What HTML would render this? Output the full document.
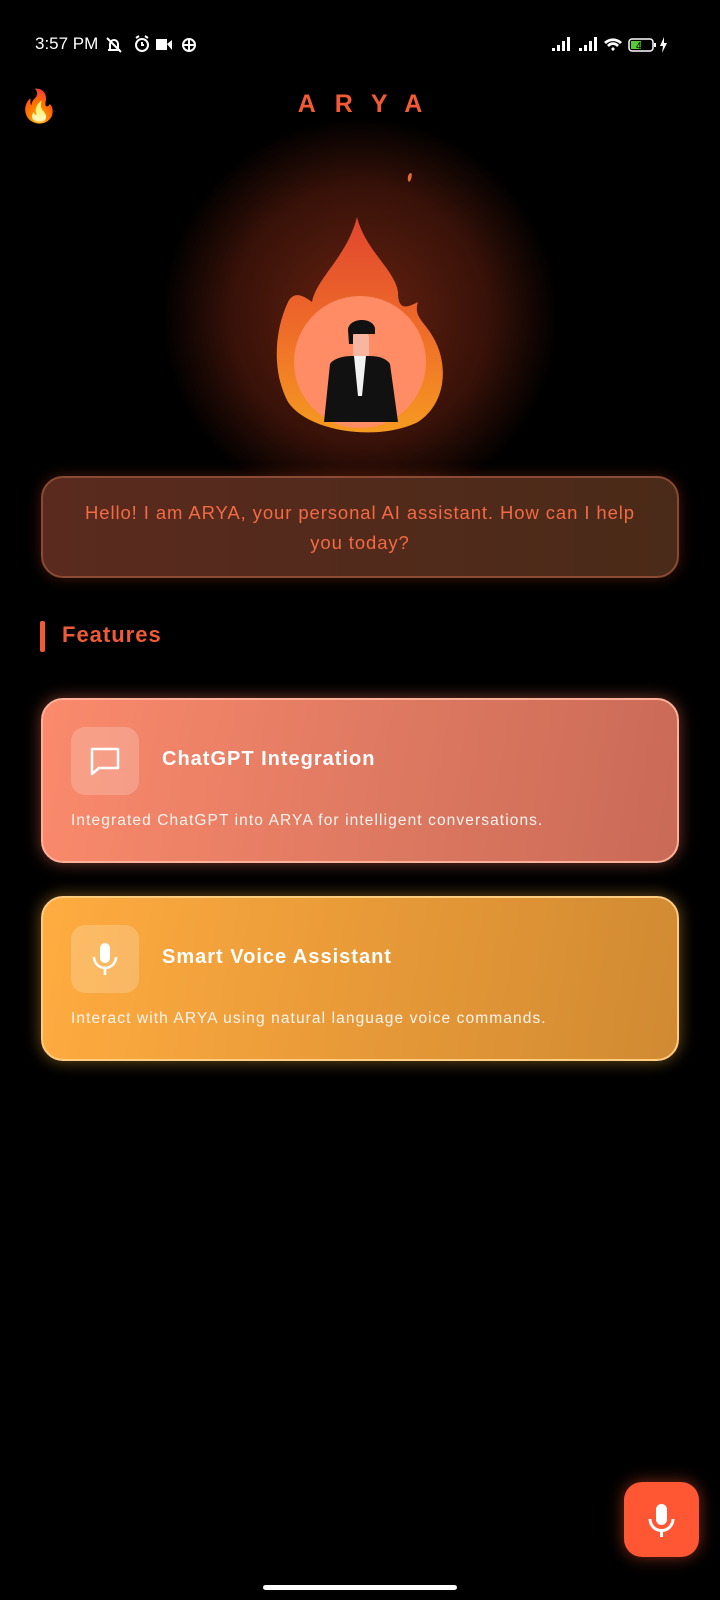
<!DOCTYPE html>
<html><head><meta charset="utf-8"><style>
*{margin:0;padding:0;box-sizing:border-box}
body{width:720px;height:1600px;background:#000;position:relative;overflow:hidden;font-family:"Liberation Sans",sans-serif;color:#fff}
.abs{position:absolute}
.sb{top:34px;font-size:17px;color:#fff}
.msg{left:41px;top:476px;width:638px;height:102px;border-radius:22px;border:2px solid #8a4a33;background:linear-gradient(90deg,#5a2a1e,#4a2a18);box-shadow:0 0 14px rgba(255,90,40,.25);color:#f36a44;font-size:18.5px;text-align:center;line-height:30px;padding-top:20px;letter-spacing:.9px;white-space:nowrap}
.card{left:41px;width:638px;height:165px;border-radius:22px}
.ic{left:28px;top:27px;width:68px;height:68px;border-radius:14px;background:rgba(255,255,255,.2)}
.t{left:119px;font-size:20px;font-weight:bold;letter-spacing:1px}
.d{left:28px;font-size:15.5px;letter-spacing:1.1px;color:#fff4ee;white-space:nowrap}
</style></head><body>
<div class="abs sb" style="left:35px">3:57 PM</div>
<svg class="abs" style="left:104px;top:35px" width="100" height="20" viewBox="0 0 100 20" fill="none" stroke="#fff" stroke-width="2">
<path d="M4 15h12M6 15V9a4 4 0 0 1 8 0v6M3 3l14 14"/>
<circle cx="38" cy="10" r="6"/><path d="M38 7v3h2M32 3l3-2M44 3l-3-2"/>
<rect x="52" y="4" width="11" height="11" fill="#fff" stroke="none"/><path d="M63 9l5-4v10z" fill="#fff" stroke="none"/>
<circle cx="85" cy="10" r="6"/><path d="M79 10h12M85 4v12"/>
</svg>
<svg class="abs" style="left:552px;top:35px" width="135" height="20" viewBox="0 0 135 20" fill="#fff">
<rect x="0" y="13" width="3" height="3"/><rect x="5" y="10" width="3" height="6"/><rect x="10" y="6" width="3" height="10"/><rect x="15" y="2" width="3" height="14"/>
<rect x="27" y="13" width="3" height="3"/><rect x="32" y="10" width="3" height="6"/><rect x="37" y="6" width="3" height="10"/><rect x="42" y="2" width="3" height="14"/>
<path d="M52 7a13 13 0 0 1 18 0l-2 2a10 10 0 0 0-14 0zM55 10a8 8 0 0 1 12 0l-2 2a5 5 0 0 0-8 0zM59 14l2-2 2 2-2 2z"/>
<rect x="77" y="4" width="24" height="12" rx="3" fill="none" stroke="#fff" stroke-width="1.5"/><rect x="79" y="6" width="10" height="8" fill="#5c3"/><rect x="102" y="8" width="2" height="4"/>
<text x="84" y="14" font-size="10" fill="#000" font-family="Liberation Sans">47</text>
<path d="M112 2l-4 9h3l-1 7 5-10h-3z"/>
</svg>
<div class="abs" style="left:19px;top:86px;font-size:32px;line-height:40px">🔥</div>
<div class="abs" style="left:0;width:720px;top:90px;text-align:center;color:#f05a35;font-size:25px;font-weight:bold;letter-spacing:19px;padding-left:19px">ARYA</div>
<div class="abs" style="left:160px;top:116px;width:400px;height:400px;border-radius:50%;background:radial-gradient(circle,rgba(120,40,20,.85) 0%,rgba(80,25,12,.7) 45%,rgba(0,0,0,0) 70%)"></div>
<svg class="abs" style="left:240px;top:150px" width="240" height="290" viewBox="0 0 240 290">
<defs><linearGradient id="fl" x1="0" y1="0" x2="0" y2="1"><stop offset="0" stop-color="#e0452e"/><stop offset=".5" stop-color="#ee6a2a"/><stop offset="1" stop-color="#f59a20"/></linearGradient></defs>
<path d="M168 26c3-6 5-2 3 3-1 4-4 4-3-3z" fill="#e86a30"/>
<path d="M117 67c-10 40-40 60-45 85-8-6-18-12-24 0-14 30-16 70 0 100 20 30 90 40 130 20 30-20 30-60 15-85-8-15-20-20-15-35-10 5-20 10-20-10C155 120 125 100 117 67z" fill="url(#fl)"/>
<circle cx="120" cy="212" r="66" fill="#ff8c64"/>
<rect x="113" y="182" width="16" height="28" rx="6" fill="#f7b6a0"/>
<path d="M108 180c0-12 24-14 27-2v6h-22v10h-4z" fill="#111"/>
<path d="M84 272l6-58c4-6 14-8 22-8h18c8 0 16 2 20 8l8 58z" fill="#111"/>
<path d="M114 206h12l-4 40h-4z" fill="#f2f2f2"/>
</svg>
<div class="abs msg">Hello! I am ARYA, your personal AI assistant. How can I help<br>you today?</div>
<div class="abs" style="left:40px;top:621px;width:5px;height:31px;background:#f05a35;border-radius:2px"></div>
<div class="abs" style="left:62px;top:622px;font-size:22px;font-weight:bold;color:#f05a35;letter-spacing:1px">Features</div>
<div class="abs card" style="top:698px;background:linear-gradient(100deg,#fb8a6c,#e07a62 50%,#c96a57);border:2px solid #ffb09a;box-shadow:0 0 16px rgba(255,120,90,.45)">
 <div class="abs ic"><svg width="68" height="68" viewBox="0 0 68 68" fill="none" stroke="#fff" stroke-width="2.5"><path d="M21 22h26v19H28l-7 6z" stroke-linejoin="round"/></svg></div>
 <div class="abs t" style="top:48px">ChatGPT Integration</div>
 <div class="abs d" style="top:112px">Integrated ChatGPT into ARYA for intelligent conversations.</div>
</div>
<div class="abs card" style="top:896px;background:linear-gradient(100deg,#ffac40,#e89a38 50%,#d08a32);border:2px solid #ffcc80;box-shadow:0 0 16px rgba(255,180,60,.45)">
 <div class="abs ic"><svg width="68" height="68" viewBox="0 0 68 68" fill="#fff"><rect x="29" y="18" width="10" height="20" rx="5"/><path d="M23 32a11 11 0 0 0 22 0" fill="none" stroke="#fff" stroke-width="2.5"/><rect x="32.7" y="43" width="2.6" height="7"/></svg></div>
 <div class="abs t" style="top:48px">Smart Voice Assistant</div>
 <div class="abs d" style="top:112px">Interact with ARYA using natural language voice commands.</div>
</div>
<div class="abs" style="left:624px;top:1482px;width:75px;height:75px;border-radius:18px;background:#ff5733;box-shadow:0 0 16px rgba(255,87,51,.5)">
<svg width="75" height="75" viewBox="0 0 75 75" fill="#fff"><rect x="32" y="22" width="11" height="21" rx="5.5"/><path d="M26 37a11.5 11.5 0 0 0 23 0" fill="none" stroke="#fff" stroke-width="3"/><rect x="36" y="48" width="3" height="7"/></svg>
</div>
<div class="abs" style="left:263px;top:1585px;width:194px;height:5px;border-radius:3px;background:#fff"></div>
</body></html>
